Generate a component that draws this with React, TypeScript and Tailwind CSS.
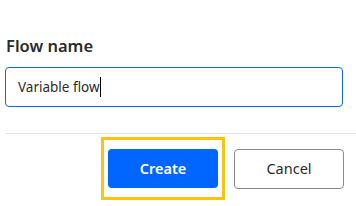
export default function App() {
  return (
    <div className="w-[356px] h-[206px] bg-white overflow-hidden font-['Noto_Sans',sans-serif]">
      <div className="pl-[5px] pt-[35px]">
        <label htmlFor="flowName" className="block pl-px text-[16.5px] leading-[22px] font-semibold text-[#2b2b2b]">
          Flow name
        </label>
        <div className="mt-[10px] w-[338px] h-[40px] border border-[#0a66f0] rounded-[4px] flex items-center pl-[12px]">
          <span className="text-[13.5px] text-[#2b2b2b]">Variable flow</span>
          <span className="w-px h-[20px] bg-black"></span>
        </div>
        <div className="mt-[26px] h-px bg-[#e6e6e6]"></div>
        <div className="mt-[3px] flex justify-end items-center gap-[9px] pr-[12px]">
          <div className="border-[3px] border-[#ffc20e] p-[9px_4px]">
            <button type="button" className="w-[110px] h-[39px] rounded-[4px] bg-[#0066ff] text-white text-[14.5px] font-semibold">
              Create
            </button>
          </div>
          <button type="button" className="w-[110px] h-[40px] rounded-[4px] border border-[#8a8a8a] bg-white text-[#2b2b2b] text-[14.5px]">
            Cancel
          </button>
        </div>
      </div>
    </div>
  );
}
